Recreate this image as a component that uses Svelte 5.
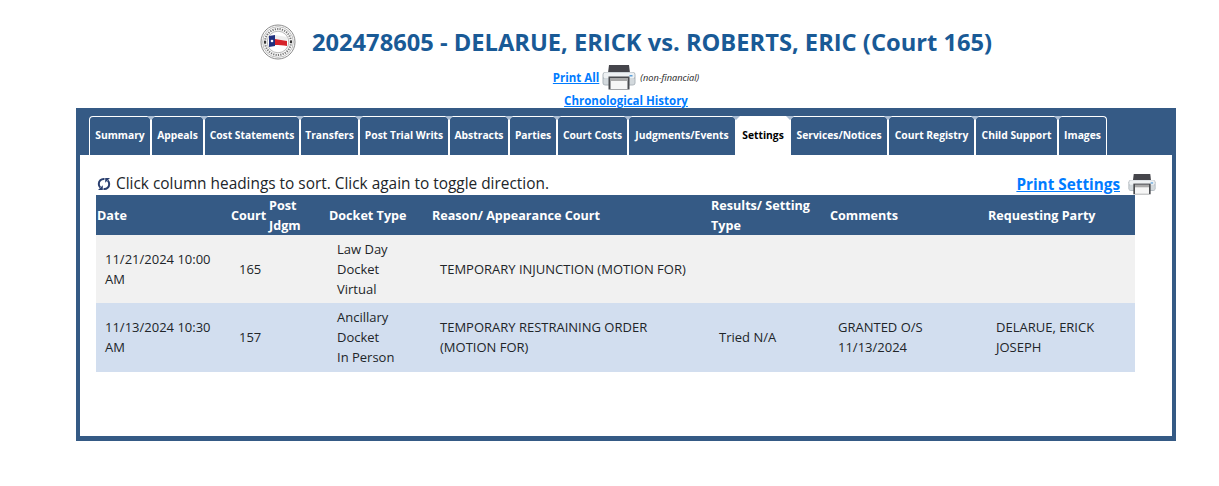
<script>
  // tab widths measured off the original site, its font is wider than ours in places
  const tabs = [
    { label: 'Summary', width: 62 },
    { label: 'Appeals', width: 53 },
    { label: 'Cost Statements', width: 96 },
    { label: 'Transfers', width: 59 },
    { label: 'Post Trial Writs', width: 90 },
    { label: 'Abstracts', width: 60 },
    { label: 'Parties', width: 48 },
    { label: 'Court Costs', width: 71 },
    { label: 'Judgments/Events', width: 108 },
    { label: 'Settings', width: 54 },
    { label: 'Services/Notices', width: 98 },
    { label: 'Court Registry', width: 87 },
    { label: 'Child Support', width: 83 },
    { label: 'Images', width: 49 },
  ];
  const active = 'Settings';

  const rows = [
    {
      date: '11/21/2024 10:00 AM',
      court: '165',
      docket: ['Law Day', 'Docket', 'Virtual'],
      reason: 'TEMPORARY INJUNCTION (MOTION FOR)',
      result: '',
      comments: '',
      party: '',
    },
    {
      date: '11/13/2024 10:30 AM',
      court: '157',
      docket: ['Ancillary', 'Docket', 'In Person'],
      reason: 'TEMPORARY RESTRAINING ORDER (MOTION FOR)',
      result: 'Tried N/A',
      comments: 'GRANTED O/S 11/13/2024',
      party: 'DELARUE, ERICK JOSEPH',
    },
  ];
</script>

{#snippet printer(w, h)}
  <svg class="printer" width={w} height={h} viewBox="0 0 34 26" aria-hidden="true">
    <path d="M7 1h20l1 8H6z" fill="#45454b" />
    <rect x="0.5" y="8" width="33" height="13.5" rx="3" fill="#aeb6bc" />
    <rect x="1.5" y="8.5" width="31" height="6" rx="2" fill="#eef1f3" />
    <rect x="1.5" y="14" width="31" height="6.5" rx="1.5" fill="#d3d9dd" />
    <rect x="27.5" y="11" width="3" height="1.5" fill="#5da2dc" />
    <rect x="6.5" y="12.5" width="21" height="13" fill="#4a4c50" />
    <path d="M8.5 14h17v11h-17z" fill="#f6f6f6" />
    <path d="M8.5 14h17v3h-17z" fill="#a9a9a9" />
  </svg>
{/snippet}

<div class="page">
  <div class="top">
    <header class="title">
      <svg class="seal" width="36" height="36" viewBox="0 0 36 36" aria-hidden="true">
        <circle cx="18" cy="18" r="17" fill="#fff" stroke="#8a8a8a" stroke-width="1" />
        <circle cx="18" cy="18" r="15.4" fill="#f8f8f8" stroke="#999" stroke-width="0.6" />
        <circle cx="18" cy="18" r="13" fill="none" stroke="#777" stroke-width="2" stroke-dasharray="1.2 1.2" />
        <circle cx="18" cy="18" r="10.8" fill="#fff" stroke="#888" stroke-width="0.6" />
        <circle cx="5" cy="18" r="1.2" fill="#333" />
        <circle cx="31" cy="18" r="1.2" fill="#333" />
        <path d="M9 12l6-1v11l-6 1z" fill="#20307f" />
        <path d="M15 11c4 1 8 1 12 2v4c-4-1-8-1-12-2z" fill="#eee" />
        <path d="M15 15c4 1 8 1 12 2v5c-4-1-8-1-12-1z" fill="#d6232a" />
        <circle cx="12" cy="17" r="1.3" fill="#fff" />
      </svg>
      <h1>202478605 - DELARUE, ERICK vs. ROBERTS, ERIC (Court 165)</h1>
    </header>

    <div class="print-all">
      <a href="#all">Print All</a>
      {@render printer(34, 26)}
      <i>(non-financial)</i>
    </div>
    <div class="history"><a href="#history">Chronological History</a></div>
  </div>

  <section class="panel">
    <nav class="tabs">
      {#each tabs as tab}
        <a class="tab" class:active={tab.label === active} href="#tab" style="width:{tab.width}px">{tab.label}</a>
      {/each}
    </nav>

    <div class="content">
      <div class="hint-row">
        <span class="hint">
          <svg width="14" height="14" viewBox="0 0 14 14" aria-hidden="true">
            <path d="M7.5 2C4 1.6 1.8 4 1.8 7c0 1.6.6 2.8 1.5 3.6M6.5 12c3.500.4 5.700-2 5.700-5 0-1.600-.6-2.800-1.500-3.600" fill="none" stroke="#2a3f6f" stroke-width="2" />
            <path d="M5.800 8.200v4.800H1zM8.200 5.800V1H13z" fill="#2a3f6f" />
          </svg>
          Click column headings to sort. Click again to toggle direction.
        </span>
        <span class="print-settings">
          <a href="#settings">Print Settings</a>
          {@render printer(28, 22)}
        </span>
      </div>

      <table>
        <colgroup>
          <col style="width:134px" />
          <col style="width:38px" />
          <col style="width:60px" />
          <col style="width:103px" />
          <col style="width:279px" />
          <col style="width:119px" />
          <col style="width:158px" />
          <col style="width:148px" />
        </colgroup>
        <thead>
          <tr>
            <th>Date</th>
            <th>Court</th>
            <th class="post">Post Jdgm</th>
            <th>Docket Type</th>
            <th>Reason/ Appearance Court</th>
            <th>Results/ Setting Type</th>
            <th>Comments</th>
            <th>Requesting Party</th>
          </tr>
        </thead>
        <tbody>
          {#each rows as row}
            <tr>
              <td>{row.date}</td>
              <td>{row.court}</td>
              <td></td>
              <td>{#each row.docket as line}{line}<br />{/each}</td>
              <td>{row.reason}</td>
              <td>{row.result}</td>
              <td>{row.comments}</td>
              <td>{row.party}</td>
            </tr>
          {/each}
        </tbody>
      </table>
    </div>
  </section>
</div>

<style>
  :global(body) {
    margin: 0;
    background: #fff;
    font-family: "Open Sans", "Liberation Sans", sans-serif;
    color: #212529;
  }
  a {
    color: #007bff;
    font-weight: 700;
  }
  .page {
    padding-top: 26px;
    height: 460px;
  }
  .top {
    padding-left: 33px;
  }
  .title {
    display: flex;
    justify-content: center;
    align-items: center;
    gap: 16px;
    height: 34px;
    margin-top: -1px;
  }
  h1 {
    margin: 0;
    font-size: 23.7px;
    line-height: 34px;
    font-weight: 700;
    color: #195a96;
    white-space: nowrap;
  }
  .print-all {
    display: flex;
    justify-content: center;
    align-items: center;
    gap: 3px;
    height: 26px;
    margin-top: 5px;
    font-size: 11.5px;
  }
  .print-all a {
    padding-top: 1px;
  }
  .print-all i {
    font-size: 9.2px;
    margin-left: 1px;
    color: #222;
  }
  .history {
    text-align: center;
    font-size: 11.5px;
    line-height: 16px;
    margin-top: 3px;
    height: 15px;
  }
  .panel {
    box-sizing: border-box;
    width: 1100px;
    height: 333px;
    margin-left: 76px;
    background: #355a85;
    padding: 8px 4px 5px;
    display: flex;
    flex-direction: column;
  }
  .tabs {
    display: flex;
    height: 39px;
    padding-left: 9px;
    flex: none;
  }
  .tab {
    position: relative;
    box-sizing: border-box;
    display: flex;
    align-items: center;
    justify-content: center;
    padding: 0 0 2px;
    border: 1px solid #fff;
    border-bottom: 0;
    border-radius: 4px 4px 0 0;
    color: #fff;
    font-size: 10.3px;
    text-decoration: none;
    white-space: nowrap;
  }
  .tab + .tab::before {
    content: "";
    position: absolute;
    top: -1px;
    left: -5px;
    border-left: 4px solid transparent;
    border-right: 4px solid transparent;
    border-top: 4px solid #a9bcd2;
  }
  .tab.active {
    background: #fff;
    color: #000;
  }
  .content {
    flex: 1;
    background: #fff;
    padding: 0 16px;
  }
  .hint-row {
    display: flex;
    justify-content: space-between;
    height: 40px;
    align-items: flex-end;
  }
  .hint {
    font-size: 15.4px;
    line-height: 20px;
    padding-left: 1px;
    display: flex;
    align-items: center;
    gap: 5px;
    color: #212529;
    margin-bottom: 1px;
  }
  .print-settings {
    display: flex;
    align-items: center;
    gap: 8px;
    font-size: 15.3px;
  }
  .printer {
    display: block;
  }
  table {
    border-collapse: collapse;
    table-layout: fixed;
    width: 1039px;
    font-size: 13px;
  }
  th {
    background: #355a85;
    color: #fff;
    text-align: left;
    font-size: 12.6px;
    line-height: 19.5px;
    padding: 1px 0 0 1px;
    height: 39px;
    font-weight: 700;
  }
  th.post {
    padding-right: 14px;
  }
  td {
    padding: 4px 8px 4px 9px;
    line-height: 20px;
  }
  tbody tr:last-child td {
    padding-bottom: 5px;
  }
  tbody tr:nth-child(odd) {
    background: #f1f1f1;
  }
  tbody tr:nth-child(even) {
    background: #d2deef;
  }
</style>
